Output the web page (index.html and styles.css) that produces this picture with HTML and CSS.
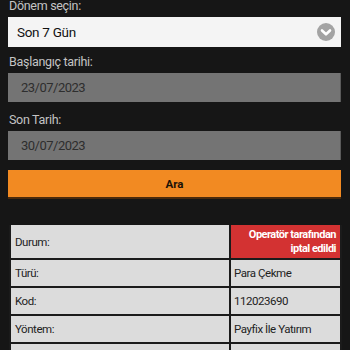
FILE: index.html
```html
<!DOCTYPE html>
<html lang="tr">
<head>
<meta charset="utf-8">
<link rel="stylesheet" href="styles.css">
</head>
<body>
<div class="form">
  <div class="label first">Dönem seçin:</div>
  <div class="select">
    <span>Son 7 Gün</span>
    <svg class="chev" width="18" height="18" viewBox="0 0 18 18"><circle cx="9" cy="9" r="9" fill="#a3a3a3"/><path d="M5 7.5 L9 11.3 L13 7.5" fill="none" stroke="#fff" stroke-width="2.6" stroke-linecap="round" stroke-linejoin="round"/></svg>
  </div>
  <div class="label">Başlangıç tarihi:</div>
  <div class="input">23/07/2023</div>
  <div class="label">Son Tarih:</div>
  <div class="input">30/07/2023</div>
  <div class="button">Ara</div>
</div>
<table class="details">
  <colgroup><col class="ck"><col class="cv"></colgroup>
  <tr class="tall"><td class="k">Durum:</td><td class="v status">Operatör tarafından<br>iptal edildi</td></tr>
  <tr><td class="k">Türü:</td><td class="v">Para Çekme</td></tr>
  <tr><td class="k">Kod:</td><td class="v">112023690</td></tr>
  <tr><td class="k">Yöntem:</td><td class="v">Payfix İle Yatırım</td></tr>
  <tr><td class="k">&nbsp;</td><td class="v">&nbsp;</td></tr>
</table>
</body>
</html>
```
FILE: styles.css
```css
html, body { margin: 0; padding: 0; }
body {
  background: #161616;
  font-family: Roboto, "Liberation Sans", sans-serif;
  padding: 0 9px 0 8px;
  overflow: hidden;
  height: 350px;
}
.form { display: flex; flex-direction: column; }
.label {
  color: #c4c4c4;
  font-size: 12.5px;
  letter-spacing: -0.3px;
  line-height: 16px;
  margin: 0 0 3px 1px;
}
.label.first { margin-top: -2px; }
.select {
  height: 30px;
  background: #f4f4f4;
  display: flex;
  align-items: center;
  justify-content: space-between;
  padding: 0 6px 0 9px;
  font-size: 13.5px;
  letter-spacing: -0.3px;
  color: #111;
  box-sizing: border-box;
  margin-bottom: 7px;
}
.chev { display: block; }
.input {
  height: 29px;
  background: #747474;
  border-right: 1px solid #5a5a5a;
  box-sizing: border-box;
  display: flex;
  align-items: center;
  padding-left: 13px;
  font-size: 13px;
  letter-spacing: -0.5px;
  color: #2e2e2e;
  margin-bottom: 10px;
}
.button {
  height: 29px;
  background: #f28a22;
  border-bottom: 2px solid #4a2a0c;
  box-sizing: border-box;
  display: flex;
  align-items: center;
  justify-content: center;
  font-weight: bold;
  font-size: 11.5px;
  color: #1a1208;
}
.details {
  margin-top: 26px;
  margin-left: 1px;
  width: 333px;
  table-layout: fixed;
  border-collapse: collapse;
  background: #dcdcdc;
  font-size: 11.5px;
  letter-spacing: -0.45px;
  color: #222;
}
.ck { width: 220px; }
.details td {
  border: 2px solid #1b1b1b;
  height: 26px;
  padding: 0 4px;
  vertical-align: middle;
  white-space: nowrap;
}
.details tr.tall td { height: 33px; }
.details tr:first-child td { border-top: none; }
.details td.k { padding-left: 4px; }
.details td.v { padding-left: 3px; }
.details td.status {
  background: #d33232;
  color: #fff;
  font-weight: bold;
  font-size: 11px;
  letter-spacing: -0.5px;
  text-align: right;
  line-height: 14px;
  padding-right: 4px;
}
```
